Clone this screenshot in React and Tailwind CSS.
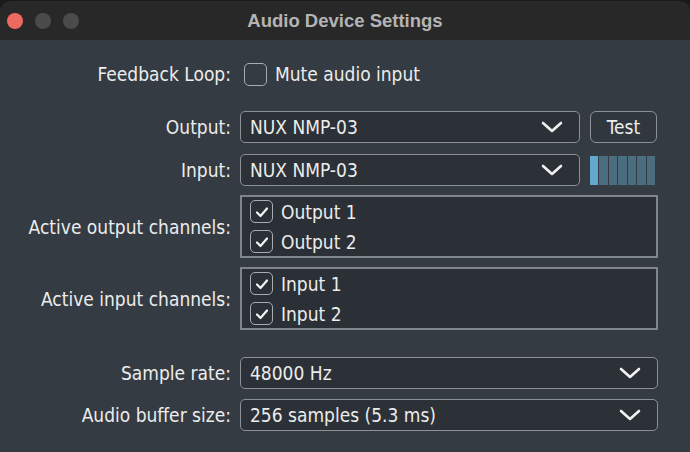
import { useState } from 'react';

const Chevron = () => (
  <svg width="22" height="12" viewBox="0 0 22 12" className="shrink-0">
    <path d="M2 2 L11 10 L20 2" fill="none" stroke="#f2f2f2" strokeWidth="2.6" strokeLinecap="round" strokeLinejoin="round" />
  </svg>
);

const Tick = () => (
  <svg width="14" height="12" viewBox="0 0 14 12">
    <path d="M2 6.5 L5.5 10 L12 2.5" fill="none" stroke="#f5f5f5" strokeWidth="2.2" strokeLinecap="round" strokeLinejoin="round" />
  </svg>
);

const Checkbox = ({ checked }) => (
  <div className="w-[23px] h-[23px] rounded-[5px] border-[1.5px] border-[#a9adb1] flex items-center justify-center shrink-0">
    {checked && <Tick />}
  </div>
);

const Label = ({ children }) => (
  <div className="w-[231px] mr-[9px] text-right shrink-0">{children}</div>
);

const Combo = ({ value, className = '' }) => (
  <div className={`h-[32px] rounded-[5px] border border-[#8c9196] bg-[#2b3137] flex items-center justify-between pl-[9px] pr-[16px] ${className}`}>
    <span>{value}</span>
    <Chevron />
  </div>
);

const ChannelBox = ({ items }) => (
  <div className="w-[418px] border-2 border-[#7e858b] bg-[#2a3036] pl-[8px] py-[3px] flex flex-col gap-[7px]">
    {items.map((name) => (
      <div key={name} className="flex items-center gap-[8px] h-[23px]">
        <Checkbox checked />
        <span>{name}</span>
      </div>
    ))}
  </div>
);

const Meter = () => (
  <div className="flex w-[65px] h-[29px] ml-[10px] gap-[1px]">
    <div className="flex-1 bg-[#62a9d0]" />
    {[1, 2, 3, 4, 5, 6].map((i) => (
      <div key={i} className="flex-1 bg-[#4a6d7f]" />
    ))}
  </div>
);

export default function App() {
  const [mute] = useState(false);

  return (
    <div className="w-[690px] h-[452px] bg-[#1a1a1a] overflow-hidden text-[19px] leading-[24px] text-[#ececec] font-stretch-condensed" style={{ fontFamily: '"DejaVu Sans", Verdana, sans-serif' }}>
      <div className="mt-[1px] h-[39px] bg-[#282828] rounded-t-[10px] flex items-center relative">
        <div className="flex gap-[12px] pl-[7px]">
          <div className="w-[16px] h-[16px] rounded-full bg-[#ed6a5e]" />
          <div className="w-[16px] h-[16px] rounded-full bg-[#4b4b4b]" />
          <div className="w-[16px] h-[16px] rounded-full bg-[#4b4b4b]" />
        </div>
        <div className="absolute inset-0 flex items-center justify-center font-bold text-[#b4b4b4] text-[18.5px] font-stretch-normal" style={{ fontFamily: '"Liberation Sans", Arial, sans-serif' }}>
          Audio Device Settings
        </div>
      </div>

      <div className="bg-[#343b42] h-[412px] pt-[22px]">
        {/* Feedback loop */}
        <div className="flex items-center h-[24px]">
          <Label>Feedback Loop:</Label>
          <div className="ml-[4px] flex items-center gap-[8px]">
            <Checkbox checked={mute} />
            <span>Mute audio input</span>
          </div>
        </div>

        {/* Output */}
        <div className="flex items-center mt-[25px]">
          <Label>Output:</Label>
          <Combo value="NUX NMP-03" className="w-[340px]" />
          <div className="ml-[10px] w-[67px] h-[32px] rounded-[6px] border border-[#8c9196] bg-[#30373d] flex items-center justify-center">Test</div>
        </div>

        {/* Input */}
        <div className="flex items-center mt-[11px]">
          <Label>Input:</Label>
          <Combo value="NUX NMP-03" className="w-[340px]" />
          <Meter />
        </div>

        {/* Channels */}
        <div className="flex items-center mt-[9px]">
          <Label>Active output channels:</Label>
          <ChannelBox items={['Output 1', 'Output 2']} />
        </div>
        <div className="flex items-center mt-[9px]">
          <Label>Active input channels:</Label>
          <ChannelBox items={['Input 1', 'Input 2']} />
        </div>

        {/* Rate / buffer */}
        <div className="flex items-center mt-[27px]">
          <Label>Sample rate:</Label>
          <Combo value="48000 Hz" className="w-[418px]" />
        </div>
        <div className="flex items-center mt-[10px]">
          <Label>Audio buffer size:</Label>
          <Combo value="256 samples (5.3 ms)" className="w-[418px]" />
        </div>
      </div>
    </div>
  );
}
